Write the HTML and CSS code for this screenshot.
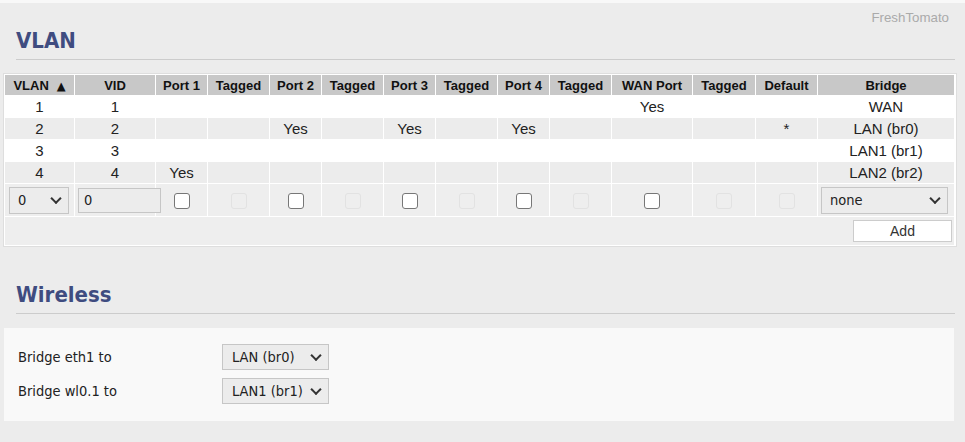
FILE: index.html
```html
<!DOCTYPE html>
<html lang="en">
<head>
    <meta charset="UTF-8">
    <meta name="viewport" content="width=device-width, initial-scale=1.0">
    <title>Advanced: VLAN</title>
    <link rel="stylesheet" href="styles.css">
</head>

<body>
    <div class="topbar"></div>
    <div class="brand">FreshTomato</div>

    <h2 class="title">VLAN</h2>

    <div class="tablebox">
        <table class="grid">
            <colgroup>
                <col class="c-vlan"><col class="c-vid">
                <col class="c-port"><col class="c-tag">
                <col class="c-port"><col class="c-tag">
                <col class="c-port"><col class="c-tag">
                <col class="c-port"><col class="c-tag">
                <col class="c-wan"><col class="c-wtag">
                <col class="c-def"><col class="c-bridge">
            </colgroup>
            <tr class="head">
                <th>VLAN<span class="sort">&#9650;</span></th>
                <th>VID</th>
                <th>Port 1</th><th>Tagged</th>
                <th>Port 2</th><th>Tagged</th>
                <th>Port 3</th><th>Tagged</th>
                <th>Port 4</th><th>Tagged</th>
                <th>WAN Port</th><th>Tagged</th>
                <th>Default</th>
                <th>Bridge</th>
            </tr>
            <tr class="even">
                <td>1</td><td>1</td>
                <td></td><td></td><td></td><td></td><td></td><td></td><td></td><td></td>
                <td>Yes</td><td></td><td></td><td>WAN</td>
            </tr>
            <tr class="odd">
                <td>2</td><td>2</td>
                <td></td><td></td><td>Yes</td><td></td><td>Yes</td><td></td><td>Yes</td><td></td>
                <td></td><td></td><td>*</td><td>LAN (br0)</td>
            </tr>
            <tr class="even">
                <td>3</td><td>3</td>
                <td></td><td></td><td></td><td></td><td></td><td></td><td></td><td></td>
                <td></td><td></td><td></td><td>LAN1 (br1)</td>
            </tr>
            <tr class="odd">
                <td>4</td><td>4</td>
                <td>Yes</td><td></td><td></td><td></td><td></td><td></td><td></td><td></td>
                <td></td><td></td><td></td><td>LAN2 (br2)</td>
            </tr>
            <tr class="editor">
                <td class="left"><span class="sel sel-vlan"><select><option>0</option></select></span></td>
                <td class="left"><input type="text" class="vid" value="0"></td>
                <td><input type="checkbox"></td><td><input type="checkbox" disabled></td>
                <td><input type="checkbox"></td><td><input type="checkbox" disabled></td>
                <td><input type="checkbox"></td><td><input type="checkbox" disabled></td>
                <td><input type="checkbox"></td><td><input type="checkbox" disabled></td>
                <td><input type="checkbox"></td><td><input type="checkbox" disabled></td>
                <td><input type="checkbox" disabled></td>
                <td class="left"><span class="sel sel-bridge"><select><option>none</option></select></span></td>
            </tr>
            <tr class="footer">
                <td colspan="14"><button class="add">Add</button></td>
            </tr>
        </table>
    </div>

    <h2 class="title wireless">Wireless</h2>

    <div class="panel">
        <div class="field">
            <label for="eth1">Bridge eth1 to</label>
            <span class="sel sel-wide"><select id="eth1"><option>LAN (br0)</option></select></span>
        </div>
        <div class="field">
            <label for="wl01">Bridge wl0.1 to</label>
            <span class="sel sel-wide"><select id="wl01"><option>LAN1 (br1)</option></select></span>
        </div>
    </div>
</body>
</html>
```

FILE: styles.css
```css
body {
    margin: 0;
    background-color: #ececec;
    color: #222;
    font-family: "Liberation Sans", Arial, sans-serif;
}
.topbar {
    height: 3px;
    background-color: #f8f8f8;
}
.brand {
    margin-top: 7px;
    padding-right: 16px;
    text-align: right;
    font-size: 13.3px;
    line-height: 16px;
    color: #aaa;
}
.title {
    margin: 2px 10px 0 16px;
    padding-bottom: 5px;
    border-bottom: 1px solid #ccc;
    font-family: "DejaVu Sans Condensed", "DejaVu Sans", sans-serif;
    font-size: 22px;
    line-height: 26px;
    font-weight: bold;
    color: #3f4c80;
}
.title.wireless {
    margin-top: 35px;
}

/* tabela de vlans */
.tablebox {
    margin: 13px 8px 0 3px;
    background-color: #fff;
    border: 1px solid #dedede;
}
.grid {
    width: 951px;
    table-layout: fixed;
    border-collapse: separate;
    border-spacing: 1px;
    font-size: 15px;
}
.c-vlan { width: 69px; }
.c-vid { width: 80px; }
.c-port { width: 51px; }
.c-tag { width: 61px; }
.c-wan { width: 80px; }
.c-wtag { width: 62px; }
.c-def { width: 61px; }
.c-bridge { width: 136px; }
.grid th {
    height: 20px;
    padding: 0;
    background-color: #c8c8c8;
    font-size: 13px;
    font-weight: bold;
    color: #111;
    text-align: center;
    white-space: nowrap;
}
.sort {
    font-family: "DejaVu Sans", sans-serif;
    font-size: 11.5px;
    margin-left: 8px;
}
.grid td {
    height: 21px;
    padding: 0;
    text-align: center;
    white-space: nowrap;
}
.grid tr.even td {
    background-color: #fff;
}
.grid tr.odd td {
    background-color: #ececec;
}
.grid tr.editor td {
    height: 32px;
    background-color: #eee;
}
.grid tr.editor td.left {
    text-align: left;
}
.grid tr.footer td {
    height: 28px;
    background-color: #eee;
    text-align: right;
}

input[type="checkbox"] {
    appearance: none;
    -webkit-appearance: none;
    width: 16px;
    height: 16px;
    margin: 0;
    vertical-align: middle;
    background-color: #fff;
    border: 1px solid #777;
    border-radius: 3px;
}
input[type="checkbox"]:disabled {
    background-color: #eee;
    border-color: #e2e2e2;
}

select, input.vid {
    appearance: none;
    -webkit-appearance: none;
    box-sizing: border-box;
    margin: 0;
    background-color: #ececec;
    border: 1px solid #c6c6c6;
    border-radius: 0;
    color: #222;
    font-family: "DejaVu Sans Condensed", "DejaVu Sans", sans-serif;
    font-size: 14.5px;
    outline: none;
}
.sel {
    position: relative;
    display: inline-block;
    vertical-align: middle;
}
.sel::after {
    content: "";
    position: absolute;
    top: 50%;
    width: 6px;
    height: 6px;
    border-right: 2px solid #333;
    border-bottom: 2px solid #333;
    transform: translateY(-70%) rotate(45deg);
    pointer-events: none;
}
.sel select {
    height: 27px;
    padding: 0 0 0 8px;
}
.sel-vlan {
    margin-left: 4px;
}
.sel-vlan select {
    width: 60px;
}
.sel-vlan::after, .sel-bridge::after {
    right: 9px;
}
.sel-bridge {
    margin-left: 3px;
}
.sel-bridge select {
    width: 127px;
}
input.vid {
    width: 83px;
    height: 25px;
    margin-left: 3px;
    padding: 0 0 0 5px;
    vertical-align: middle;
}
.add {
    width: 99px;
    height: 22px;
    margin-right: 2px;
    padding: 0;
    vertical-align: middle;
    background-color: #fff;
    border: 1px solid #ccc;
    color: #333;
    font-family: "Liberation Sans", Arial, sans-serif;
    font-size: 14px;
}

/* wireless */
.panel {
    margin: 14px 11px 0 4px;
    padding: 16px 14px 17px;
    background-color: #f9f9f9;
}
.field {
    display: flex;
    align-items: center;
    font-family: "DejaVu Sans Condensed", "DejaVu Sans", sans-serif;
    font-size: 14.5px;
}
.field + .field {
    margin-top: 8px;
}
.field label {
    width: 204px;
}
.sel-wide select {
    width: 107px;
    height: 26px;
    padding-left: 9px;
}
.sel-wide::after {
    right: 9px;
}
```
